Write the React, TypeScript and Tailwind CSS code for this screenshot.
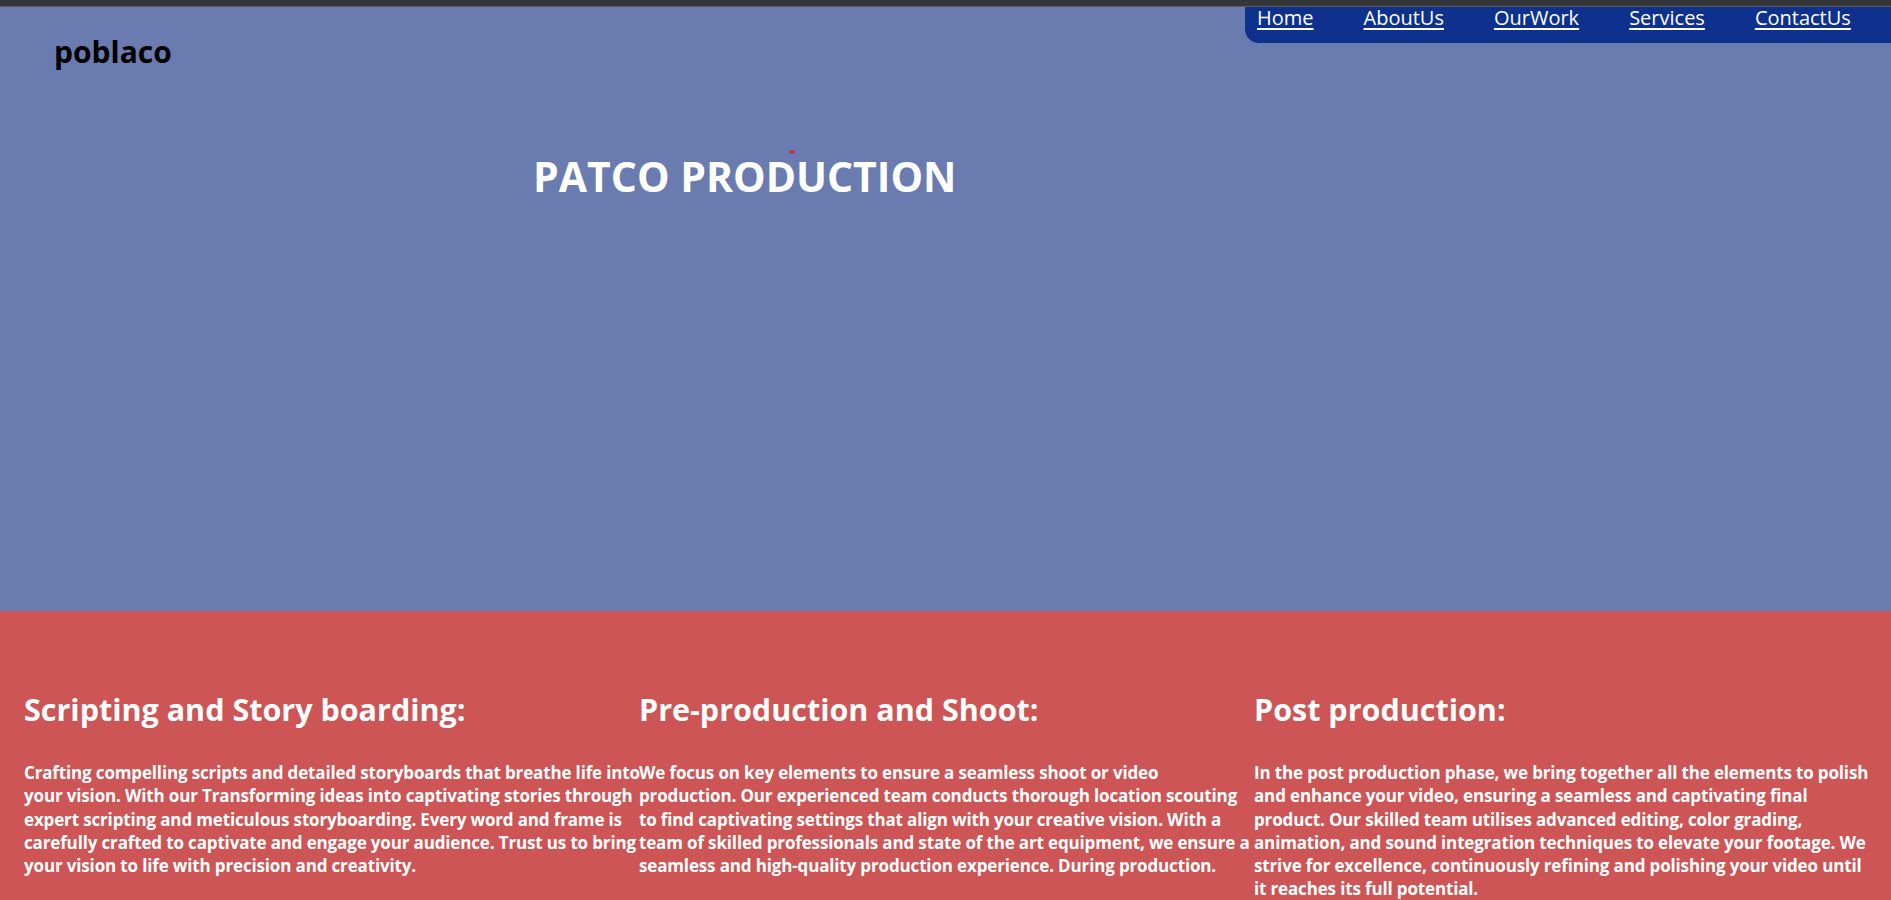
import React from "react"

const services = [
  {
    title: "Scripting and Story boarding:",
    lines: [
      "Crafting compelling scripts and detailed storyboards that breathe life into",
      "your vision. With our Transforming ideas into captivating stories through",
      "expert scripting and meticulous storyboarding. Every word and frame is",
      "carefully crafted to captivate and engage your audience. Trust us to bring",
      "your vision to life with precision and creativity.",
    ],
  },
  {
    title: "Pre-production and Shoot:",
    lines: [
      "We focus on key elements to ensure a seamless shoot or video",
      "production. Our experienced team conducts thorough location scouting",
      "to find captivating settings that align with your creative vision. With a",
      "team of skilled professionals and state of the art equipment, we ensure a",
      "seamless and high-quality production experience. During production.",
    ],
  },
  {
    title: "Post production:",
    lines: [
      "In the post production phase, we bring together all the elements to polish",
      "and enhance your video, ensuring a seamless and captivating final",
      "product. Our skilled team utilises advanced editing, color grading,",
      "animation, and sound integration techniques to elevate your footage. We",
      "strive for excellence, continuously refining and polishing your video until",
      "it reaches its full potential.",
    ],
  },
]

const links = ["Home", "AboutUs", "OurWork", "Services", "ContactUs"]

export default function App() {
  return (
    <div className="min-h-screen overflow-hidden font-['Open_Sans',sans-serif]">
      {/* window strip */}
      <div className="h-[7px] bg-[#35363a] border-b border-[#5b5c5f]" />

      {/* hero */}
      <section className="relative h-[604px] bg-[#6a7bb0]">
        <div className="flex items-start justify-between">
          <h1 className="pl-[54px] pt-[27px] text-[30px] leading-[36px] font-bold text-black">
            poblaco
          </h1>
          <nav className="h-[36px] w-[646px] rounded-bl-[14px] bg-[#0e318d] pl-[12px]">
            <ul className="flex gap-[50px]">
              {links.map((l) => (
                <li key={l}>
                  <a
                    href="#"
                    className="text-[20px] leading-[22px] text-white underline underline-offset-[3px]"
                  >
                    {l}
                  </a>
                </li>
              ))}
            </ul>
          </nav>
        </div>
        <h2 className="mt-[82px] pl-[533px] text-[41px] leading-[48px] font-bold text-white">
          PATCO PRODUCTION
        </h2>
        <span className="absolute left-[790px] top-[143px] h-[4px] w-[4px] rounded-full bg-[#e0201c]" />
      </section>

      {/* services */}
      <section className="grid min-h-[289px] grid-cols-[615px_615px_615px] bg-[#cd5555] px-6 pt-[78px] text-white">
        {services.map((s) => (
          <div key={s.title}>
            <h3 className="text-[30.5px] leading-[40px] font-bold">{s.title}</h3>
            <p className="mt-[32px] whitespace-nowrap text-[17px] leading-[23.3px] font-bold tracking-[-0.15px]">
              {s.lines.map((line, i) => (
                <span key={i} className="block">
                  {line}
                </span>
              ))}
            </p>
          </div>
        ))}
      </section>
    </div>
  )
}
